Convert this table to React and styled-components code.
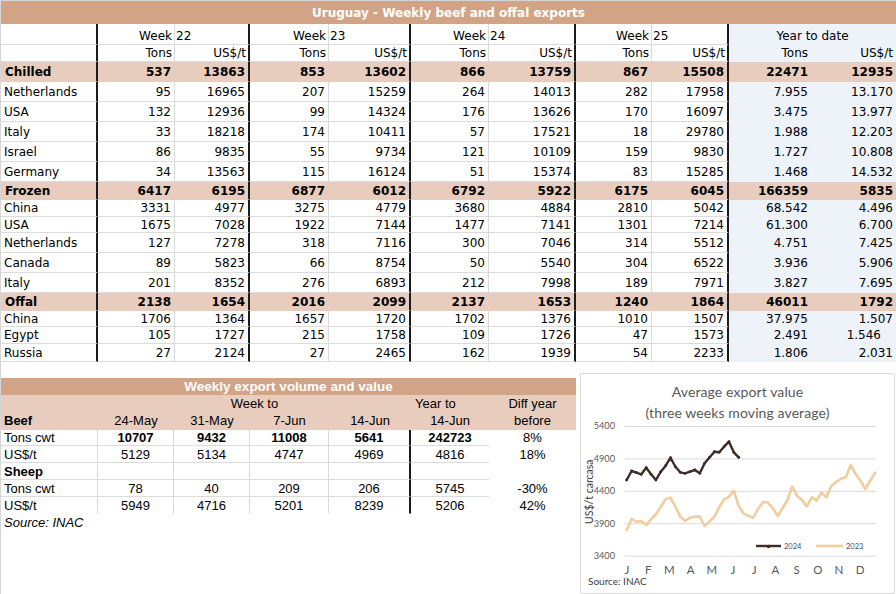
import React from 'react';
import styled, { createGlobalStyle } from 'styled-components';

const GlobalStyle = createGlobalStyle`
  html, body {
    margin: 0;
    padding: 0;
    background: #ffffff;
  }
  body {
    width: 896px;
    height: 594px;
    overflow: hidden;
  }
`;

const TOP_COLS = '97px 77px 75px 79px 82px 78px 87px 76px 77px 83px 84px';
const TOP_EDGES = ['dark', 'light', 'dark', 'light', 'dark', 'light', 'dark', 'light', 'dark', 'none', 'none'];
const LOW_COLS = '97px 76px 76px 79px 82px 78px 87px';
const LOW_EDGES = ['light', 'light', 'light', 'light', 'dark', 'none', 'none'];

const FILLS = {
  cat: '#E8CDBE',
  ytd: '#EEF2F9',
  head: '#E8CDBE',
  white: '#ffffff',
};

const weeks = ['22', '23', '24', '25'];

const groups = [
  {
    name: 'Chilled',
    h: 20,
    total: ['537', '13863', '853', '13602', '866', '13759', '867', '15508', '22471', '12935'],
    rows: [
      ['Netherlands', '95', '16965', '207', '15259', '264', '14013', '282', '17958', '7.955', '13.170'],
      ['USA', '132', '12936', '99', '14324', '176', '13626', '170', '16097', '3.475', '13.977'],
      ['Italy', '33', '18218', '174', '10411', '57', '17521', '18', '29780', '1.988', '12.203'],
      ['Israel', '86', '9835', '55', '9734', '121', '10109', '159', '9830', '1.727', '10.808'],
      ['Germany', '34', '13563', '115', '16124', '51', '15374', '83', '15285', '1.468', '14.532'],
    ],
    heights: [20, 20, 20, 20, 20],
  },
  {
    name: 'Frozen',
    h: 18,
    total: ['6417', '6195', '6877', '6012', '6792', '5922', '6175', '6045', '166359', '5835'],
    rows: [
      ['China', '3331', '4977', '3275', '4779', '3680', '4884', '2810', '5042', '68.542', '4.496'],
      ['USA', '1675', '7028', '1922', '7144', '1477', '7141', '1301', '7214', '61.300', '6.700'],
      ['Netherlands', '127', '7278', '318', '7116', '300', '7046', '314', '5512', '4.751', '7.425'],
      ['Canada', '89', '5823', '66', '8754', '50', '5540', '304', '6522', '3.936', '5.906'],
      ['Italy', '201', '8352', '276', '6893', '212', '7998', '189', '7971', '3.827', '7.695'],
    ],
    heights: [17, 16, 20, 20, 20],
  },
  {
    name: 'Offal',
    h: 18,
    total: ['2138', '1654', '2016', '2099', '2137', '1653', '1240', '1864', '46011', '1792'],
    rows: [
      ['China', '1706', '1364', '1657', '1720', '1702', '1376', '1010', '1507', '37.975', '1.507'],
      ['Egypt', '105', '1727', '215', '1758', '109', '1726', '47', '1573', '2.491', '1.546'],
      ['Russia', '27', '2124', '27', '2465', '162', '1939', '54', '2233', '1.806', '2.031'],
    ],
    heights: [16, 17, 18],
  },
];

// last-column cells that are not flush right in the sheet
const LAST_COL_PAD = { Egypt: 15 };

const lowRows = [
  { label: 'Tons cwt', bold: true, cells: ['10707', '9432', '11008', '5641', '242723', '8%'], h: 16 },
  { label: 'US$/t', cells: ['5129', '5134', '4747', '4969', '4816', '18%'], h: 17 },
  { label: 'Sheep', head: true, cells: ['', '', '', '', '', ''], h: 17 },
  { label: 'Tons cwt', cells: ['78', '40', '209', '206', '5745', '-30%'], h: 17 },
  { label: 'US$/t', cells: ['5949', '4716', '5201', '8239', '5206', '42%'], h: 17, last: true },
];

const D24 = [4567, 4706, 4680, 4654, 4757, 4654, 4567, 4695, 4788, 4911, 4772, 4685, 4670, 4695, 4721, 4670, 4824, 4916, 5004, 4994, 5081, 5158, 4994, 4916];
const D23 = [
  3795, 3965, 3924, 3934, 3872, 3960, 4037, 4155, 4274, 4294, 4155, 4001, 3934, 3985, 4001, 4001, 3857, 3924, 4001, 4145, 4268, 4309, 4402, 4166, 4052, 4011,
  3985, 4124, 4227, 4217, 4130, 4011, 4130, 4258, 4464, 4320, 4258, 4160, 4299, 4248, 4371, 4299, 4474, 4536, 4587, 4608, 4798, 4659, 4556, 4428, 4556, 4680,
];
const MONTHS = ['J', 'F', 'M', 'A', 'M', 'J', 'J', 'A', 'S', 'O', 'N', 'D'];
const TICKS = [5400, 4900, 4400, 3900, 3400];

const yOf = (v) => (5400 - v) * 0.0648;
const xOf = (i) => 45.7 + i * 4.87;
const toPoints = (data) => data.map((v, i) => `${xOf(i).toFixed(1)},${yOf(v).toFixed(1)}`).join(' ');

function edgeStyle(p) {
  if (p.$edge === 'dark') return '2px solid #1b1b1b';
  if (p.$edge === 'light') return `1px solid ${p.$fill ? 'transparent' : '#D9D9D9'}`;
  return 'none';
}

const Page = styled.div`
  box-sizing: border-box;
  width: 896px;
  height: 594px;
  border-left: 1px solid #d6d6d6;
  border-top: 1px solid #d6d6d6;
  display: flex;
  flex-direction: column;
  overflow: hidden;
`;

const TopTable = styled.div`
  display: flex;
  flex-direction: column;
  font-family: 'DejaVu Sans', Verdana, sans-serif;
  font-size: 12px;
  color: #000;
`;

const Banner = styled.div`
  height: ${(p) => p.$h}px;
  background: #d2a485;
  color: #ffffff;
  font-weight: 700;
  font-size: ${(p) => p.$size}px;
  display: flex;
  align-items: center;
  justify-content: center;
`;

const Row = styled.div`
  display: grid;
  grid-template-columns: ${(p) => p.$cols};
  height: ${(p) => p.$h}px;
`;

const Cell = styled.div`
  box-sizing: border-box;
  display: flex;
  align-items: center;
  justify-content: ${(p) => (p.$align === 'left' ? 'flex-start' : p.$align === 'center' ? 'center' : 'flex-end')};
  grid-column: ${(p) => (p.$span ? `span ${p.$span}` : 'auto')};
  padding: ${(p) => p.$pt || 0}px ${(p) => (p.$pr ?? 3)}px 0 ${(p) => (p.$pl ?? 3)}px;
  white-space: nowrap;
  overflow: hidden;
  font-weight: ${(p) => (p.$bold ? 700 : 400)};
  background: ${(p) => FILLS[p.$fill] || 'transparent'};
  border-bottom: 1px solid ${(p) => (p.$fill || p.$flat ? 'transparent' : '#DCDCDC')};
  border-right: ${edgeStyle};
`;

const Lower = styled.div`
  display: flex;
  align-items: flex-start;
  padding-top: 11px;
`;

const LowTable = styled.div`
  width: 575px;
  margin-top: 5px;
  display: flex;
  flex-direction: column;
  font-family: 'Liberation Sans', Arial, sans-serif;
  font-size: 13px;
  color: #000;
`;

const SourceLine = styled.div`
  height: 17px;
  display: flex;
  align-items: center;
  padding-left: 3px;
  font-style: italic;
`;

const ChartBox = styled.div`
  box-sizing: border-box;
  width: 315px;
  height: 221px;
  margin-left: 4px;
  border: 1px solid #d9d9d9;
  border-radius: 2px;
  background: #ffffff;
  font-family: Lato, 'Open Sans', sans-serif;
  display: flex;
  flex-direction: column;
`;

const ChartTitle = styled.div`
  padding: 8px 0 3px;
  text-align: center;
  font-size: 14px;
  line-height: 20.5px;
  color: #595959;
  letter-spacing: 0.1px;
`;

const Plot = styled.svg`
  display: block;
  overflow: visible;
`;

function TopHeader() {
  return (
    <>
      <Row $cols={TOP_COLS} $h={21}>
        <Cell $edge="dark" />
        {weeks.map((w) => (
          <React.Fragment key={w}>
            <Cell $edge="light" $pt={3} $pr={2}>Week</Cell>
            <Cell $edge="dark" $pt={3} $align="left" $pl={1}>{w}</Cell>
          </React.Fragment>
        ))}
        <Cell $fill="ytd" $span={2} $align="center" $pt={3}>Year to date</Cell>
      </Row>
      <Row $cols={TOP_COLS} $h={17}>
        <Cell $edge="dark" />
        {weeks.map((w) => (
          <React.Fragment key={w}>
            <Cell $edge="light" $pr={2}>Tons</Cell>
            <Cell $edge="dark" $pr={2}>US$/t</Cell>
          </React.Fragment>
        ))}
        <Cell $fill="ytd" $pr={4}>Tons</Cell>
        <Cell $fill="ytd" $pr={3}>US$/t</Cell>
      </Row>
    </>
  );
}

function TopGroup({ group }) {
  return (
    <>
      <Row $cols={TOP_COLS} $h={group.h}>
        <Cell $edge="dark" $fill="cat" $bold $align="left" $pl={4}>{group.name}</Cell>
        {group.total.map((v, i) => (
          <Cell key={i} $edge={TOP_EDGES[i + 1]} $fill="cat" $bold $pr={i === 8 ? 4 : 3}>{v}</Cell>
        ))}
      </Row>
      {group.rows.map((r, ri) => (
        <Row key={ri} $cols={TOP_COLS} $h={group.heights[ri]}>
          {r.map((v, i) => {
            const ytd = i >= 9;
            let pr = i === 9 ? 4 : 3;
            if (i === 10 && LAST_COL_PAD[r[0]]) pr = LAST_COL_PAD[r[0]];
            return (
              <Cell
                key={i}
                $edge={TOP_EDGES[i]}
                $fill={ytd ? 'ytd' : undefined}
                $align={i === 0 ? 'left' : 'right'}
                $pl={i === 0 ? 3 : 2}
                $pr={pr}
              >
                {v}
              </Cell>
            );
          })}
        </Row>
      ))}
    </>
  );
}

function WeeklyTable() {
  return (
    <LowTable>
      <Banner $h={17} $size={13.5}>Weekly export volume and value</Banner>
      <Row $cols={LOW_COLS} $h={17}>
        <Cell $fill="head" />
        <Cell $fill="head" $span={4} $align="center">Week to</Cell>
        <Cell $fill="head" $align="left" $pl={4}>Year to</Cell>
        <Cell $fill="head" $align="center">Diff year</Cell>
      </Row>
      <Row $cols={LOW_COLS} $h={18}>
        <Cell $fill="head" $bold $align="left">Beef</Cell>
        {['24-May', '31-May', '7-Jun', '14-Jun', '14-Jun', 'before'].map((d, i) => (
          <Cell key={i} $fill="head" $align="center" $pl={0} $pr={0}>{d}</Cell>
        ))}
      </Row>
      {lowRows.map((r, ri) => (
        <Row key={ri} $cols={LOW_COLS} $h={r.h}>
          <Cell $edge="light" $flat={r.last} $bold={r.head} $align="left">{r.label}</Cell>
          {r.cells.map((v, i) => (
            <Cell
              key={i}
              $edge={LOW_EDGES[i + 1]}
              $fill={i === 5 ? 'white' : undefined}
              $flat={r.last}
              $bold={r.bold && i < 5}
              $align="center"
              $pl={0}
              $pr={0}
            >
              {v}
            </Cell>
          ))}
        </Row>
      ))}
      <SourceLine>Source: INAC</SourceLine>
    </LowTable>
  );
}

function ExportChart() {
  return (
    <ChartBox>
      <ChartTitle>
        Average export value
        <br />
        (three weeks moving average)
      </ChartTitle>
      <Plot width="313" height="168" viewBox="0 0 313 168">
        {TICKS.map((t) => (
          <g key={t}>
            <line x1="43.7" x2="295" y1={yOf(t) + 0.5} y2={yOf(t) + 0.5} stroke="#d9d9d9" strokeWidth="1" />
            <text x="34" y={yOf(t) + 3.3} textAnchor="end" fontSize="9.2" fill="#595959">{t}</text>
          </g>
        ))}
        <text
          transform="translate(12 65.7) rotate(-90)"
          textAnchor="middle"
          fontSize="10.5"
          fill="#404040"
        >
          US$/t carcasa
        </text>
        {MONTHS.map((m, i) => (
          <text key={i} x={46 + i * 21.2} y="148" textAnchor="middle" fontSize="11.5" fill="#595959">{m}</text>
        ))}
        <polyline points={toPoints(D23)} fill="none" stroke="#f1cea1" strokeWidth="2.7" strokeLinejoin="round" strokeLinecap="round" />
        <polyline points={toPoints(D24)} fill="none" stroke="#3c2e26" strokeWidth="2.4" strokeLinejoin="round" strokeLinecap="round" />
        {D24.map((v, i) => (
          <circle key={i} cx={xOf(i)} cy={yOf(v)} r="1.4" fill="#3c2e26" />
        ))}
        <line x1="175" x2="200" y1="120" y2="120" stroke="#3c2e26" strokeWidth="2.4" />
        <circle cx="187.5" cy="120.5" r="1.8" fill="#3c2e26" />
        <text x="203" y="123" fontSize="7.5" fill="#3d4c6b">2024</text>
        <line x1="235" x2="262" y1="120" y2="120" stroke="#f1cea1" strokeWidth="2.7" />
        <text x="265" y="123" fontSize="7.5" fill="#3d4c6b">2023</text>
        <text x="7" y="159" fontSize="10" fill="#404040">Source: INAC</text>
      </Plot>
    </ChartBox>
  );
}

export default function App() {
  return (
    <>
      <GlobalStyle />
      <Page>
        <TopTable>
          <Banner $h={23} $size={12}>Uruguay - Weekly beef and offal exports</Banner>
          <TopHeader />
          {groups.map((g) => (
            <TopGroup key={g.name} group={g} />
          ))}
        </TopTable>
        <Lower>
          <WeeklyTable />
          <ExportChart />
        </Lower>
      </Page>
    </>
  );
}
